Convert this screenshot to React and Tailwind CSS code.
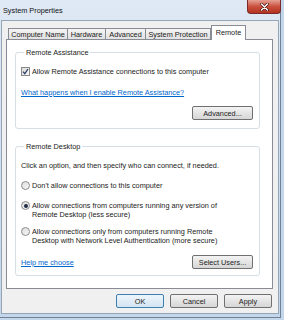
const tabs = [
  { label: "Computer Name", w: "w-[59px]" },
  { label: "Hardware", w: "w-[38px]" },
  { label: "Advanced", w: "w-[40px]" },
  { label: "System Protection", w: "w-[66px] border-r" },
];

function Button({ children, primary = false, className = "" }) {
  return (
    <div
      className={`
        h-[14px]
        flex items-center justify-center
        rounded-[2px]
        border
        ${primary ? "border-[#3c7fb1] from-[#eef6fc] to-[#d3e4f1]" : "border-[#707070] from-[#f3f3f3] to-[#d6d6d6]"}
        bg-gradient-to-b
        text-[#222]
        ${className}
      `}
    >
      {children}
    </div>
  );
}

function Radio({ checked = false }) {
  return (
    <div className="
      w-[9px] h-[9px]
      shrink-0
      rounded-full
      border border-[#8a8a8a]
      bg-gradient-to-br from-[#dcdcdc] to-[#f8f8f8]
      flex items-center justify-center
    ">
      {checked && <div className="w-[4px] h-[4px] rounded-full bg-[#1d2c46]" />}
    </div>
  );
}

function GroupBox({ title, className = "", children }) {
  return (
    <fieldset className={`
      border border-[#d5dfe5]
      rounded-[3px]
      ${className}
    `}>
      <legend className="ml-[3px] px-[2px] leading-[9px] text-[#222]">{title}</legend>
      {children}
    </fieldset>
  );
}

export default function App() {
  return (
    <div className="
      w-[284px] h-[320px]
      overflow-hidden
      bg-[#c3d6ea]
      font-['Liberation_Sans',Arial,sans-serif]
      text-[7.3px] leading-[9px]
      text-[#222]
    ">

      {/* WINDOW */}

      <div className="
        w-[281px] h-[318px]
        flex flex-col
        bg-gradient-to-b from-[#dfe9f5] via-[#d0dff0] to-[#c4d6ea]
        border-r border-b border-[#6f8299]
      ">

        {/* TITLE BAR */}

        <div className="h-[20px] flex items-start">
          <span className="mt-[6px] ml-[3px] text-[#111]">System Properties</span>
          <div className="flex-1" />
          <div className="
            w-[34px] h-[14px]
            -mr-[1px]
            rounded-b-[4px]
            border border-t-0 border-[#7a2a2a]
            bg-gradient-to-b from-[#e4a195] via-[#c9503f] to-[#b3331f]
            flex items-center justify-center
          ">
            <svg width="9" height="8" viewBox="0 0 9 8">
              <path d="M1.5 1 L7.5 7 M7.5 1 L1.5 7" stroke="#3a0b05" strokeWidth="2.6" strokeLinecap="round" />
              <path d="M1.5 1 L7.5 7 M7.5 1 L1.5 7" stroke="#fff" strokeWidth="1.5" strokeLinecap="round" />
            </svg>
          </div>
        </div>

        {/* CLIENT */}

        <div className="
          flex-1
          mx-[1px] mb-[3px]
          border border-[#95a5b8]
          bg-[#f0f0f0]
          flex flex-col
        ">

          {/* TABS */}

          <div className="
            mt-[4px]
            ml-[6px]
            h-[15px]
            flex items-end
            relative z-10
            -mb-[1px]
          ">
            {tabs.map((t) => (
              <div
                key={t.label}
                className={`
                  ${t.w}
                  h-[11px]
                  mb-[1px]
                  border-t border-l border-[#898c95]
                  bg-gradient-to-b from-[#f4f4f4] to-[#e1e1e1]
                  text-center
                  pt-[1px]
                  whitespace-nowrap
                `}
              >
                {t.label}
              </div>
            ))}
            <div className="
              w-[35px] h-[15px]
              border-t border-l border-r border-[#898c95]
              bg-white
              text-center
              pt-[2px]
            ">
              Remote
            </div>
          </div>

          {/* PANEL */}

          <div className="
            ml-[4px] mr-[5px]
            h-[250px]
            border border-[#898c95]
            bg-white
            pt-[8px] pl-[8px] pr-[12px]
          ">

            <GroupBox title="Remote Assistance" className="px-[5px] pr-[6px] pb-[8px]">
              <div className="mt-[10px] flex items-center gap-[2px]">
                <div className="
                  w-[9px] h-[9px]
                  border border-[#8a8a8a]
                  bg-gradient-to-br from-[#dcdcdc] to-[#f8f8f8]
                  flex items-center justify-center
                ">
                  <svg width="7" height="7" viewBox="0 0 7 7">
                    <path d="M1 3.6 L2.8 5.6 L6 1" fill="none" stroke="#2b3f66" strokeWidth="1.3" />
                  </svg>
                </div>
                <span>Allow Remote Assistance connections to this computer</span>
              </div>
              <div className="mt-[12px] text-[#0066cc] underline">
                What happens when I enable Remote Assistance?
              </div>
              <div className="mt-[9px] flex justify-end">
                <Button className="w-[61px]">Advanced...</Button>
              </div>
            </GroupBox>

            <GroupBox title="Remote Desktop" className="mt-[13px] px-[5px] pr-[6px] pb-[6px]">
              <div className="mt-[10px]">
                Click an option, and then specify who can connect, if needed.
              </div>
              <div className="mt-[11px] flex items-start gap-[2px]">
                <Radio />
                <span>Don't allow connections to this computer</span>
              </div>
              <div className="mt-[11px] flex items-start gap-[2px]">
                <Radio checked />
                <span>Allow connections from computers running any version of<br />Remote Desktop (less secure)</span>
              </div>
              <div className="mt-[8px] flex items-start gap-[2px]">
                <Radio />
                <span>Allow connections only from computers running Remote<br />Desktop with Network Level Authentication (more secure)</span>
              </div>
              <div className="mt-[10px] flex items-center justify-between">
                <span className="text-[#0066cc] underline">Help me choose</span>
                <Button className="w-[61px]">Select Users...</Button>
              </div>
            </GroupBox>

          </div>

          {/* ACTIONS */}

          <div className="mt-[5px] pr-[6px] flex justify-end gap-[6px]">
            <Button primary className="w-[48px]">OK</Button>
            <Button className="w-[48px]">Cancel</Button>
            <Button className="w-[48px]">Apply</Button>
          </div>

        </div>

      </div>

    </div>
  );
}
